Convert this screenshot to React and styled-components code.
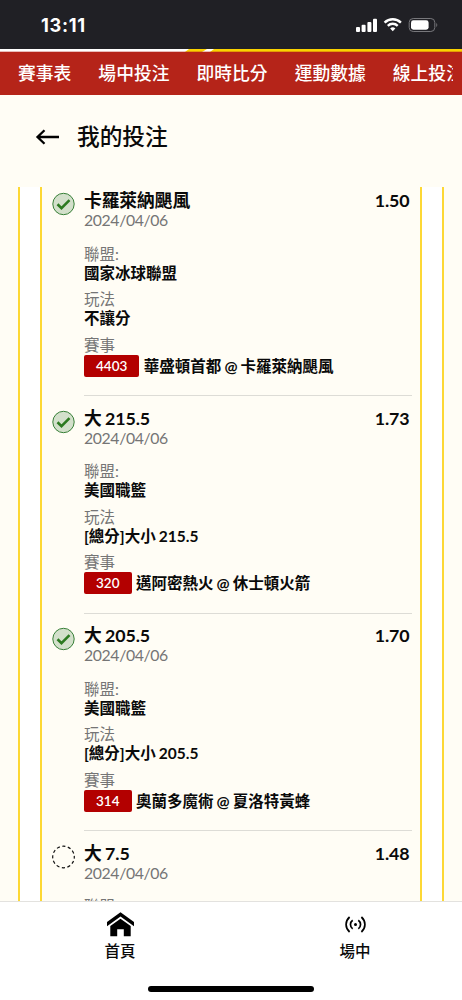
import React from "react";
import styled, { createGlobalStyle } from "styled-components";

const legs = [
  {
    pick: "卡羅萊納颶風",
    date: "2024/04/06",
    odds: "1.50",
    league: "國家冰球聯盟",
    market: "不讓分",
    code: "4403",
    match: "華盛頓首都 @ 卡羅萊納颶風",
    won: true,
  },
  {
    pick: "大 215.5",
    date: "2024/04/06",
    odds: "1.73",
    league: "美國職籃",
    market: "[總分]大小 215.5",
    code: "320",
    match: "邁阿密熱火 @ 休士頓火箭",
    won: true,
  },
  {
    pick: "大 205.5",
    date: "2024/04/06",
    odds: "1.70",
    league: "美國職籃",
    market: "[總分]大小 205.5",
    code: "314",
    match: "奧蘭多魔術 @ 夏洛特黃蜂",
    won: true,
  },
  {
    pick: "大 7.5",
    date: "2024/04/06",
    odds: "1.48",
    league: "",
    market: "",
    code: "",
    match: "",
    won: false,
  },
];

const navItems = ["賽事表", "場中投注", "即時比分", "運動數據", "線上投注"];

const GlobalStyle = createGlobalStyle`
  * {
    box-sizing: border-box;
  }

  body {
    margin: 0;
    background: #fffdf5;
    color: #0a0a0a;
    font-family: Lato, "Noto Sans CJK TC", sans-serif;
  }
`;

const Page = styled.div`
  display: flex;
  flex-direction: column;
  width: 462px;
  height: 1000px;
  overflow: hidden;
  background: #fffdf5;
`;

const StatusBar = styled.div`
  display: flex;
  align-items: center;
  justify-content: space-between;
  height: 49px;
  padding: 1px 23px 0 41px;
  background: #202025;
  color: #fff;
  flex-shrink: 0;
`;

const Time = styled.span`
  font-family: Inter, sans-serif;
  font-size: 18.2px;
  font-weight: 700;
  letter-spacing: 0.7px;
  line-height: 20px;
`;

const StatusIcons = styled.svg`
  display: block;
  width: 84px;
  height: 16px;
`;

const Stripe = styled.svg`
  display: block;
  width: 462px;
  height: 3px;
  flex-shrink: 0;
`;

const Nav = styled.nav`
  height: 43px;
  padding: 0 9px 0 18px;
  background: #b52419;
  flex-shrink: 0;
`;

const NavScroll = styled.div`
  display: flex;
  align-items: center;
  gap: 27px;
  height: 42px;
  overflow: hidden;
`;

const NavItem = styled.span`
  flex-shrink: 0;
  color: #fff;
  font-size: 17.8px;
  font-weight: 500;
  line-height: 24px;
`;

const Header = styled.header`
  display: flex;
  align-items: center;
  gap: 17px;
  height: 92px;
  padding: 0 35px 9px;
  flex-shrink: 0;
`;

const Title = styled.h1`
  margin: 0;
  font-size: 22.7px;
  font-weight: 500;
  line-height: 30px;
`;

const Ticket = styled.main`
  flex: 1;
  min-height: 0;
  margin: 0 18px;
  padding: 0 20px;
  border: solid #fdd835;
  border-width: 0 2px;
  background: #fff;
  overflow: hidden;
`;

const Legs = styled.div`
  height: 100%;
  padding: 4px 8px 0 10px;
  border: solid #fdd835;
  border-width: 0 2px;
  background: #fffdf5;
  overflow: hidden;
`;

const LegRow = styled.section`
  display: flex;
  gap: 8px;
  height: 217.5px;
`;

const LegIcon = styled.svg`
  display: block;
  width: 24px;
  height: 24px;
  margin-top: 1px;
  flex-shrink: 0;
`;

const LegBody = styled.div`
  flex: 1;
  height: 205px;
  border-bottom: 1px solid #dddcd6;
`;

const LegHead = styled.div`
  display: flex;
  justify-content: space-between;
  height: 20px;
  padding-right: 2.5px;
  font-size: 17.8px;
  font-weight: 700;
  letter-spacing: -0.1px;
  line-height: 19.8px;
  word-spacing: -0.8px;
`;

const LegDate = styled.div`
  height: 18px;
  margin-bottom: 15.7px;
  color: #757575;
  font-size: 15.8px;
  letter-spacing: -0.38px;
  line-height: 17px;
`;

const Field = styled.div`
  margin-bottom: 7.5px;
`;

const Label = styled.div`
  height: 18px;
  color: #757575;
  font-size: 15.5px;
  line-height: 18px;
`;

const Value = styled.div`
  height: 20px;
  font-size: 15.5px;
  font-weight: 700;
  line-height: 20px;
  white-space: nowrap;
  word-spacing: -0.7px;
`;

const Match = styled(Value)`
  display: flex;
  align-items: center;
  gap: 4.5px;
  height: 24px;
`;

const Badge = styled.span`
  padding: 0 12px;
  border-radius: 2px;
  background: #b30000;
  color: #fff;
  font-size: 13.5px;
  font-weight: 600;
  line-height: 22px;
`;

const TabBar = styled.footer`
  display: grid;
  grid-template-columns: 240px 230px;
  grid-template-rows: 64px 1fr;
  height: 99px;
  border-top: 1px solid #e3e2df;
  background: #fff;
  flex-shrink: 0;
`;

const Tab = styled.div`
  display: flex;
  flex-direction: column;
  align-items: center;
  padding-top: 8px;
  font-size: 15.5px;
  font-weight: 500;
  line-height: 22px;
`;

const TabIcon = styled.svg`
  display: block;
  width: 30px;
  height: 30px;
`;

const HomeIndicator = styled.div`
  grid-column: 1 / -1;
  width: 166px;
  height: 6px;
  margin: 20px 0 0 148px;
  border-radius: 3px;
  background: #000;
`;

function WonIcon() {
  return (
    <LegIcon viewBox="0 0 24 24" fill="none">
      <circle cx="11.5" cy="12" r="10.7" fill="#d3e0cb" stroke="#388038" />
      <path d="M5.5 12.2l4 3.9 8-8" stroke="#2c7a20" strokeWidth="2.6" />
    </LegIcon>
  );
}

function PendingIcon() {
  return (
    <LegIcon viewBox="0 0 24 24" fill="none">
      <circle
        cx="11.5"
        cy="12"
        r="10.8"
        stroke="#111"
        strokeWidth="1.2"
        strokeDasharray="3.2 2.455"
        strokeDashoffset="1.6"
      />
    </LegIcon>
  );
}

function Leg({ leg }) {
  return (
    <LegRow>
      {leg.won ? <WonIcon /> : <PendingIcon />}
      <LegBody>
        <LegHead>
          <span>{leg.pick}</span>
          <span>{leg.odds}</span>
        </LegHead>
        <LegDate>{leg.date}</LegDate>
        <Field>
          <Label>聯盟:</Label>
          <Value>{leg.league}</Value>
        </Field>
        {leg.code && (
          <>
            <Field>
              <Label>玩法</Label>
              <Value>{leg.market}</Value>
            </Field>
            <Label>賽事</Label>
            <Match>
              <Badge>{leg.code}</Badge>
              <span>{leg.match}</span>
            </Match>
          </>
        )}
      </LegBody>
    </LegRow>
  );
}

export default function App() {
  return (
    <Page>
      <GlobalStyle />
      <StatusBar>
        <Time>13:11</Time>
        <StatusIcons viewBox="0 0 84 16" fill="none">
          <g fill="#fff">
            <rect x="1" y="10" width="4" height="5" rx="1" />
            <rect x="6.6" y="7.7" width="4" height="7.3" rx="1" />
            <rect x="12.4" y="4.9" width="4" height="10.1" rx="1" />
            <rect x="18" y="1.7" width="4" height="13.3" rx="1" />
          </g>
          <g stroke="#fff" strokeWidth="2.4">
            <path d="M29.6 5.6a11.6 11.6 0 0 1 16.3 0" />
            <path d="M32.8 8.8a7.1 7.1 0 0 1 9.9 0" />
          </g>
          <path d="M37.75 14.2l-2.6-2.7a3.8 3.8 0 0 1 5.2 0z" fill="#fff" />
          <rect x="54.2" y="1.5" width="25.6" height="13" rx="4" stroke="#77777b" />
          <rect x="56" y="3.3" width="17.6" height="9.4" rx="2.4" fill="#fff" />
          <path d="M81.3 6c1.3.5 1.3 3.6 0 4.1z" fill="#77777b" />
        </StatusIcons>
      </StatusBar>
      <Stripe viewBox="0 0 462 3">
        <rect width="462" height="3" fill="#fff" />
        <path d="M189 0h18l-5 3h-17z" fill="#fad200" />
        <path d="M214 0h248v3H210z" fill="#fad200" />
        <rect y="2.4" width="462" height="0.6" fill="#b52419" opacity="0.5" />
      </Stripe>
      <Nav>
        <NavScroll>
          {navItems.map((item) => (
            <NavItem key={item}>{item}</NavItem>
          ))}
        </NavScroll>
      </Nav>
      <Header>
        <svg width="25" height="18" viewBox="0 0 25 18" fill="none">
          <path d="M9.5 2.2L2.5 9l7 6.8M2.5 9H24" stroke="#000" strokeWidth="2.3" />
        </svg>
        <Title>我的投注</Title>
      </Header>
      <Ticket>
        <Legs>
          {legs.map((leg, i) => (
            <Leg key={i} leg={leg} />
          ))}
        </Legs>
      </Ticket>
      <TabBar>
        <Tab>
          <TabIcon viewBox="0 0 30 30">
            <path d="M15.5 2.2L2 12v4.2L15.5 6.6 29 16.2V12z" />
            <path d="M15.5 8.7L5.3 16v10.2h6.9v-7h6.6v7h6.9V16z" />
          </TabIcon>
          首頁
        </Tab>
        <Tab>
          <TabIcon viewBox="0 0 30 30" fill="none" stroke="#000" strokeWidth="1.7">
            <circle cx="15.5" cy="14.5" r="1.5" fill="#000" stroke="none" />
            <path d="M12.7 10.2c-3 2.2-3 6.4 0 8.6M18.3 10.2c3 2.2 3 6.4 0 8.6" />
            <path d="M9.6 7c-4.7 4.3-4.7 10.7 0 15M21.4 7c4.7 4.3 4.7 10.7 0 15" />
          </TabIcon>
          場中
        </Tab>
        <HomeIndicator />
      </TabBar>
    </Page>
  );
}
